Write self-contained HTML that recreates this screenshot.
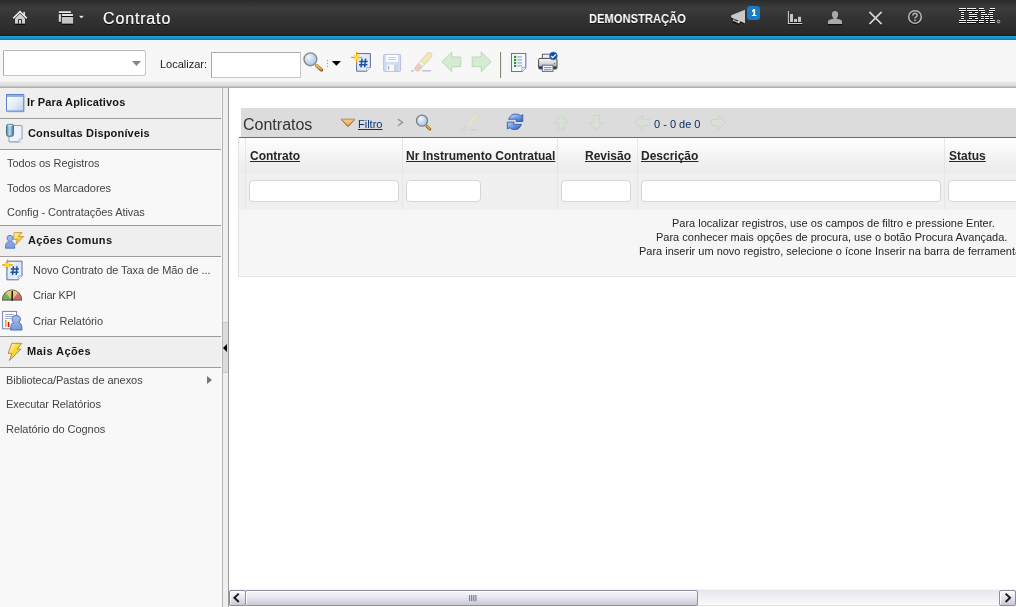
<!DOCTYPE html>
<html><head><meta charset="utf-8">
<style>
*{box-sizing:border-box}
html,body{margin:0;padding:0}
body{width:1016px;height:607px;overflow:hidden;position:relative;background:#fff;font-family:"Liberation Sans",sans-serif;}
.a{position:absolute}
.t{position:absolute;white-space:nowrap;font-size:11px;line-height:13px;color:#444;will-change:transform}
.s{letter-spacing:-0.06px}
.b{font-weight:bold}
.t{text-decoration-skip-ink:none}
svg{position:absolute;overflow:visible}
</style></head><body>

<!-- HEADER -->
<div class="a" style="left:0;top:0;width:1016px;height:36px;background:linear-gradient(#2b2b2b 0px,#3c3c3c 8px,#353535 15px,#2e2e2e 26px,#272727 34px,#1e1a1a 36px)"></div>
<div class="a" style="left:0;top:36px;width:1016px;height:4px;background:linear-gradient(#1ea0d8 0,#1694cc 50%,#0b78b0 100%)"></div>
<div class="t" style="left:103px;top:10px;font-size:16px;line-height:18px;color:#fff;letter-spacing:0.85px;-webkit-text-stroke:0.2px #fff;text-shadow:0 1px 0 #000">Contrato</div>
<div class="t b" style="left:589px;top:12px;font-size:12.5px;line-height:15px;color:#fff;transform:scaleX(.895);transform-origin:0 0;text-shadow:0 1px 0 #111">DEMONSTRAÇÃO</div>


<!-- header icons -->
<svg style="left:10px;top:8px" width="20" height="20">
 <polyline points="3.2,11.2 10,4.4 16.8,11.2" fill="none" stroke="#000" stroke-width="1.8" opacity=".8"/>
 <rect x="13.3" y="3.9" width="1.7" height="4.2" fill="#dcdcdc"/>
 <polygon points="5,10.5 10,5.5 15,10.5 15,15.8 5,15.8" fill="#cdcdcd"/>
 <polyline points="3.2,10.4 10,3.6 16.8,10.4" fill="none" stroke="#ececec" stroke-width="1.6"/>
 <rect x="8.2" y="11.2" width="3.7" height="4.6" fill="#111"/>
 <rect x="9" y="12" width="2.1" height="3.8" fill="#d8d8d8"/>
 <rect x="5" y="15.8" width="10.2" height="1" fill="#000" opacity=".85"/>
</svg>
<svg style="left:55px;top:8px" width="32" height="20">
 <rect x="3.8" y="3.2" width="12.3" height="2" rx="0.8" fill="#e6e6e6"/>
 <rect x="3.8" y="5.2" width="12.3" height="1" fill="#000" opacity=".8"/>
 <rect x="3.8" y="6.1" width="2.1" height="7.8" fill="#d6d6d6"/>
 <rect x="3.8" y="13.9" width="2.1" height="1" fill="#000" opacity=".7"/>
 <rect x="6.9" y="6.1" width="11.2" height="1.9" rx="0.8" fill="#e4e4e4"/>
 <rect x="6.9" y="8" width="11.2" height="1" fill="#000" opacity=".8"/>
 <rect x="6.9" y="9" width="11.2" height="6.8" rx="0.6" fill="#c4c4c4"/>
 <rect x="6.9" y="15.8" width="11.2" height="1" fill="#000" opacity=".8"/>
 <polygon points="23.4,7.4 29.4,7.4 26.4,11.2" fill="#000" opacity=".7"/>
 <polygon points="23.9,7.7 28.9,7.7 26.4,10.6" fill="#eee"/>
</svg>
<svg style="left:726px;top:4px" width="38" height="24">
 <polygon points="5.2,12.2 19,6 19,19.4 14.6,17.4 13,20.2 6.6,17.5 8,15.6 5.2,14.4" fill="#000" opacity=".6" transform="translate(0,1)"/>
 <polygon points="5.2,11.2 19,5.8 19,19.4 14.6,17.3 13,19.4 6.6,16.6 8,14.8 5.2,13.6" fill="#c9c9c9"/>
 <polygon points="8.6,14.9 12.6,16.4 11.6,17.6 7.8,16" fill="#333"/>
 <rect x="21" y="2" width="13" height="14" rx="3" fill="#1a7bc2"/>
 <path d="M27.4,5.1 H29.1 V11 H30.4 V12.1 H25.9 V11 H27.4 V7.2 L26,7.9 V6.6 Z" fill="#fff"/>
</svg>
<svg style="left:784px;top:6px" width="20" height="20">
 <rect x="3.9" y="5" width="1" height="13" fill="#ccc"/>
 <rect x="3.9" y="17" width="14.4" height="1" fill="#ccc"/>
 <rect x="3.9" y="18" width="14.4" height="1" fill="#000" opacity=".6"/>
 <rect x="6" y="8" width="3" height="8" fill="#c4c4c4"/>
 <rect x="10" y="13" width="3" height="3" fill="#c4c4c4"/>
 <rect x="14" y="10.8" width="3" height="5.2" fill="#c4c4c4"/>
 <rect x="6" y="16" width="11" height="1" fill="#000" opacity=".5"/>
</svg>
<svg style="left:826px;top:6px" width="20" height="20">
 <path d="M2,18.2 L2,15.8 Q2,13.6 6,13 L7.6,12.4 Q5.8,10.8 5.8,8.6 Q5.8,5 9,5 Q12.2,5 12.2,8.6 Q12.2,10.8 10.4,12.4 L12,13 Q16,13.6 16,15.8 L16,18.2 Z" fill="#000" opacity=".7" transform="translate(0,1)"/>
 <path d="M2,18 L2,15.8 Q2,13.6 6,13 L7.6,12.4 Q5.8,10.8 5.8,8.6 Q5.8,5 9,5 Q12.2,5 12.2,8.6 Q12.2,10.8 10.4,12.4 L12,13 Q16,13.6 16,15.8 L16,18 Z" fill="#a8a8a8"/>
</svg>
<svg style="left:864px;top:6px" width="22" height="22">
 <path d="M5.4,6 L17.6,18.2 M17.6,6 L5.4,18.2" stroke="#000" stroke-width="1.9" opacity=".6" transform="translate(0,1)"/>
 <path d="M5.4,6 L17.6,18.2 M17.6,6 L5.4,18.2" stroke="#cfcfcf" stroke-width="1.8"/>
</svg>
<svg style="left:906px;top:8px" width="20" height="20">
 <circle cx="9" cy="9.2" r="6.3" fill="none" stroke="#000" stroke-width="1.7" opacity=".5" transform="translate(0,.7)"/>
 <circle cx="9" cy="9" r="6.3" fill="none" stroke="#b4b4b4" stroke-width="1.6"/>
 <path d="M6.9,7.6 Q6.9,5.3 9,5.3 Q11.1,5.3 11.1,7.3 Q11.1,8.5 9.8,9.1 Q9,9.5 9,10.6" fill="none" stroke="#b4b4b4" stroke-width="1.5"/>
 <rect x="8.2" y="11.5" width="1.6" height="1.5" fill="#b4b4b4"/>
</svg>
<svg style="left:955px;top:4px" width="50" height="24"><rect x="4" y="4" width="7" height="1" fill="#f2f2f2"/><rect x="4" y="5" width="7" height="1" fill="#000" opacity=".75"/><rect x="12" y="4" width="9" height="1" fill="#f2f2f2"/><rect x="12" y="5" width="9" height="1" fill="#000" opacity=".75"/><rect x="24" y="4" width="5" height="1" fill="#f2f2f2"/><rect x="24" y="5" width="5" height="1" fill="#000" opacity=".75"/><rect x="35" y="4" width="5" height="1" fill="#f2f2f2"/><rect x="35" y="5" width="5" height="1" fill="#000" opacity=".75"/><rect x="4" y="6" width="7" height="1" fill="#f2f2f2"/><rect x="4" y="7" width="7" height="1" fill="#000" opacity=".75"/><rect x="12" y="6" width="11" height="1" fill="#f2f2f2"/><rect x="12" y="7" width="11" height="1" fill="#000" opacity=".75"/><rect x="24" y="6" width="6" height="1" fill="#f2f2f2"/><rect x="24" y="7" width="6" height="1" fill="#000" opacity=".75"/><rect x="34" y="6" width="6" height="1" fill="#f2f2f2"/><rect x="34" y="7" width="6" height="1" fill="#000" opacity=".75"/><rect x="6" y="8" width="3" height="1" fill="#f2f2f2"/><rect x="6" y="9" width="3" height="1" fill="#000" opacity=".75"/><rect x="14" y="8" width="3" height="1" fill="#f2f2f2"/><rect x="14" y="9" width="3" height="1" fill="#000" opacity=".75"/><rect x="20" y="8" width="3" height="1" fill="#f2f2f2"/><rect x="20" y="9" width="3" height="1" fill="#000" opacity=".75"/><rect x="26" y="8" width="4" height="1" fill="#f2f2f2"/><rect x="26" y="9" width="4" height="1" fill="#000" opacity=".75"/><rect x="34" y="8" width="4" height="1" fill="#f2f2f2"/><rect x="34" y="9" width="4" height="1" fill="#000" opacity=".75"/><rect x="6" y="10" width="3" height="1" fill="#f2f2f2"/><rect x="6" y="11" width="3" height="1" fill="#000" opacity=".75"/><rect x="14" y="10" width="8" height="1" fill="#f2f2f2"/><rect x="14" y="11" width="8" height="1" fill="#000" opacity=".75"/><rect x="26" y="10" width="6" height="1" fill="#f2f2f2"/><rect x="26" y="11" width="6" height="1" fill="#000" opacity=".75"/><rect x="33" y="10" width="5" height="1" fill="#f2f2f2"/><rect x="33" y="11" width="5" height="1" fill="#000" opacity=".75"/><rect x="6" y="12" width="3" height="1" fill="#f2f2f2"/><rect x="6" y="13" width="3" height="1" fill="#000" opacity=".75"/><rect x="14" y="12" width="8" height="1" fill="#f2f2f2"/><rect x="14" y="13" width="8" height="1" fill="#000" opacity=".75"/><rect x="26" y="12" width="3" height="1" fill="#f2f2f2"/><rect x="26" y="13" width="3" height="1" fill="#000" opacity=".75"/><rect x="30" y="12" width="4" height="1" fill="#f2f2f2"/><rect x="30" y="13" width="4" height="1" fill="#000" opacity=".75"/><rect x="35" y="12" width="3" height="1" fill="#f2f2f2"/><rect x="35" y="13" width="3" height="1" fill="#000" opacity=".75"/><rect x="6" y="14" width="3" height="1" fill="#f2f2f2"/><rect x="6" y="15" width="3" height="1" fill="#000" opacity=".75"/><rect x="14" y="14" width="3" height="1" fill="#f2f2f2"/><rect x="14" y="15" width="3" height="1" fill="#000" opacity=".75"/><rect x="20" y="14" width="3" height="1" fill="#f2f2f2"/><rect x="20" y="15" width="3" height="1" fill="#000" opacity=".75"/><rect x="26" y="14" width="3" height="1" fill="#f2f2f2"/><rect x="26" y="15" width="3" height="1" fill="#000" opacity=".75"/><rect x="30" y="14" width="4" height="1" fill="#f2f2f2"/><rect x="30" y="15" width="4" height="1" fill="#000" opacity=".75"/><rect x="35" y="14" width="3" height="1" fill="#f2f2f2"/><rect x="35" y="15" width="3" height="1" fill="#000" opacity=".75"/><rect x="4" y="16" width="7" height="1" fill="#f2f2f2"/><rect x="4" y="17" width="7" height="1" fill="#000" opacity=".75"/><rect x="12" y="16" width="11" height="1" fill="#f2f2f2"/><rect x="12" y="17" width="11" height="1" fill="#000" opacity=".75"/><rect x="24" y="16" width="5" height="1" fill="#f2f2f2"/><rect x="24" y="17" width="5" height="1" fill="#000" opacity=".75"/><rect x="31" y="16" width="2" height="1" fill="#f2f2f2"/><rect x="31" y="17" width="2" height="1" fill="#000" opacity=".75"/><rect x="35" y="16" width="5" height="1" fill="#f2f2f2"/><rect x="35" y="17" width="5" height="1" fill="#000" opacity=".75"/><rect x="4" y="18" width="7" height="1" fill="#f2f2f2"/><rect x="4" y="19" width="7" height="1" fill="#000" opacity=".75"/><rect x="12" y="18" width="9" height="1" fill="#f2f2f2"/><rect x="12" y="19" width="9" height="1" fill="#000" opacity=".75"/><rect x="24" y="18" width="5" height="1" fill="#f2f2f2"/><rect x="24" y="19" width="5" height="1" fill="#000" opacity=".75"/><rect x="31" y="18" width="2" height="1" fill="#f2f2f2"/><rect x="31" y="19" width="2" height="1" fill="#000" opacity=".75"/><rect x="35" y="18" width="5" height="1" fill="#f2f2f2"/><rect x="35" y="19" width="5" height="1" fill="#000" opacity=".75"/><circle cx="43.5" cy="17.5" r="1.3" fill="none" stroke="#ddd" stroke-width=".8"/></svg>
<!-- TOOLBAR -->
<div class="a" style="left:0;top:40px;width:1016px;height:48px;background:linear-gradient(#f7f7f7 0,#f7f7f7 41px,#e9e9e9 42px,#dadada 46px,#aeaeae 47px)"></div>
<div class="a" style="left:3px;top:50px;width:143px;height:26px;background:#fff;border:1px solid #c8c8c8;border-left-color:#aaa;border-top-color:#bbb;border-radius:0 3px 3px 0"></div>
<svg style="left:132px;top:61px" width="10" height="6"><path d="M0 0H9L4.5 5Z" fill="#888"/></svg>
<div class="t" style="left:160px;top:58px;color:#222">Localizar:</div>
<div class="a" style="left:211px;top:52px;width:90px;height:26px;background:#fff;border:1px solid #c6c6c6;border-left-color:#aaa;border-top-color:#aaa"></div>


<!-- toolbar icons -->
<svg style="left:300px;top:48px" width="46" height="28">
 <defs>
  <radialGradient id="lens" cx="0.38" cy="0.35" r="0.7"><stop offset="0" stop-color="#f4f8fc"/><stop offset=".45" stop-color="#c8ddf2"/><stop offset="1" stop-color="#a6c6ea"/></radialGradient>
  <linearGradient id="hdl" x1="0" y1="0" x2="1" y2="1"><stop offset="0" stop-color="#ffd84a"/><stop offset="1" stop-color="#e89a10"/></linearGradient>
 </defs>
 <line x1="16.6" y1="17.6" x2="21.6" y2="22" stroke="#7a4a20" stroke-width="3.2" stroke-linecap="round"/>
 <line x1="16.6" y1="17.4" x2="21.4" y2="21.6" stroke="url(#hdl)" stroke-width="2" stroke-linecap="round"/>
 <circle cx="10.4" cy="11.3" r="6.4" fill="url(#lens)" stroke="#8a8a8a" stroke-width="1.4"/>
 <circle cx="27.5" cy="12.5" r=".7" fill="#9aa0b8"/>
 <circle cx="27.5" cy="15.4" r=".7" fill="#9aa0b8"/>
 <circle cx="27.5" cy="18.5" r=".7" fill="#9aa0b8"/>
 <polygon points="31.8,12.9 41,12.9 36.4,17.8" fill="#000"/>
</svg>
<svg style="left:348px;top:49px" width="26" height="26">
 <defs><linearGradient id="pg" x1="0" y1="0" x2="1" y2="1"><stop offset="0" stop-color="#fff"/><stop offset=".5" stop-color="#dde6f6"/><stop offset="1" stop-color="#f8faff"/></linearGradient></defs>
 <path d="M8.6,4.6 H22.4 V18.4 L18.8,22.2 H8.6 Z" fill="url(#pg)" stroke="#5c6c9c" stroke-width="1"/>
 <path d="M22.4,18.4 H18.8 V22.2" fill="#fff" stroke="#8898c0" stroke-width=".8"/>
 <path d="M14,9.6 L13,18.4 M17.6,9.6 L16.6,18.4 M11.3,12.4 H19.7 M11,15.8 H19.4" stroke="#1a52b0" stroke-width="1.5" fill="none"/>
 <path d="M8.6,3 V13.8 M3,8.4 H14.2" stroke="#f5a000" stroke-width="1.3"/>
 <path d="M5.4,5.8 L11.8,11 M11.8,5.8 L5.4,11" stroke="#f5b000" stroke-width=".9" opacity=".8"/>
 <circle cx="8.6" cy="8.4" r="2" fill="#ffe800"/>
</svg>
<svg style="left:380px;top:49px" width="54" height="26" opacity="1">
 <rect x="3.6" y="5.4" width="17" height="17" rx="1" fill="#d2dcf2" stroke="#b8c4de" stroke-width="1"/>
 <rect x="6" y="6" width="12" height="7" fill="#fbfcff"/>
 <rect x="8" y="8" width="8" height=".9" fill="#c4cad8"/>
 <rect x="8" y="10" width="8" height=".9" fill="#c4cad8"/>
 <rect x="7" y="15.6" width="11" height="6.4" fill="#c8d2e8"/>
 <rect x="7" y="15.6" width="7" height="6.4" fill="#f8f8fa"/>
 <rect x="8" y="17" width="1.2" height="3.6" fill="#a8a8a8"/>
 <path d="M37.6,19.4 L49.2,6.2" stroke="#d8ccb4" stroke-width="6" stroke-linecap="round"/>
 <path d="M42.4,13.9 L49.2,6.2" stroke="#f2eab4" stroke-width="4.6" stroke-linecap="round"/>
 <path d="M37.6,19.4 L40.4,16.2" stroke="#f0c6be" stroke-width="4.6" stroke-linecap="round"/>
 <path d="M40.2,16.4 L43.2,13" stroke="#d2e6de" stroke-width="4.6"/>
 <path d="M41.3,15.2 L42.1,14.2" stroke="#f4faf8" stroke-width="4.6"/>
 <rect x="31" y="21" width="3" height="1.6" fill="#c0c6dc"/>
 <rect x="42" y="21" width="9" height="1.6" fill="#c0c6dc"/>
</svg>
<svg style="left:438px;top:49px" width="70" height="30">
 <path d="M4,12.7 L13.7,3 V8 H22.8 V17.7 H13.7 V22.8 Z" fill="#d6ecd2" stroke="#b6dab2" stroke-width="1" stroke-linejoin="round"/>
 <path d="M53,12.7 L43.3,3 V8 H34.2 V17.7 H43.3 V22.8 Z" fill="#d6ecd2" stroke="#b6dab2" stroke-width="1" stroke-linejoin="round"/>
 <rect x="62" y="3" width="1.1" height="26" fill="#8c8878"/>
</svg>
<svg style="left:506px;top:49px" width="56" height="26">
 <path d="M5.5,4.5 H19.8 V18.6 L16,22.5 H5.5 Z" fill="#f6f8fe" stroke="#6676a6" stroke-width="1.1"/>
 <path d="M19.8,18.6 H16 V22.5" fill="#fff" stroke="#8090b8" stroke-width=".8"/>
 <rect x="8" y="6.8" width="2.2" height="2.2" fill="#20a020"/>
 <rect x="8" y="9.8" width="2.2" height="2.2" fill="#20a020"/>
 <rect x="8" y="12.8" width="2.2" height="2.2" fill="#20a020"/>
 <rect x="8" y="15.8" width="2.2" height="2.2" fill="#20a020"/>
 <rect x="11.3" y="7.4" width="4.7" height="1" fill="#8896b8"/>
 <rect x="11.3" y="10.4" width="4.7" height="1" fill="#8896b8"/>
 <rect x="11.3" y="13.4" width="4.7" height="1" fill="#8896b8"/>
 <rect x="11.3" y="16.4" width="4.7" height="1" fill="#8896b8"/>
 <defs><linearGradient id="prn" x1="0" y1="0" x2="0" y2="1"><stop offset="0" stop-color="#f6f6f6"/><stop offset=".55" stop-color="#d2d2d2"/><stop offset="1" stop-color="#8a8a8a"/></linearGradient></defs>
 <rect x="36.4" y="5.2" width="11" height="7" fill="#eef0f8" stroke="#5a6080" stroke-width="1"/>
 <rect x="32.6" y="9.4" width="18.4" height="10.6" rx="1.4" fill="url(#prn)" stroke="#4a4a4a" stroke-width="1"/>
 <rect x="33.2" y="17.4" width="17.2" height="2.2" fill="#303030"/>
 <rect x="36.4" y="16.2" width="10.6" height="6.2" fill="#fafbfe" stroke="#5a6a98" stroke-width="1"/>
 <rect x="38" y="18.2" width="7.4" height=".9" fill="#777"/>
 <rect x="38" y="20.3" width="7.4" height=".9" fill="#777"/>
 <circle cx="48.5" cy="14.6" r=".8" fill="#30b030"/>
 <circle cx="47.4" cy="6.9" r="4" fill="#1448a0" stroke="#6a90d8" stroke-width=".7"/>
 <path d="M45.2,7 L46.8,8.7 L49.8,5.3" stroke="#fff" stroke-width="1.2" fill="none"/>
</svg>
<!-- SIDEBAR -->
<div class="a" style="left:0;top:88px;width:222px;height:519px;background:#f8f8f8"></div>
<div class="a" style="left:222px;top:88px;width:7px;height:519px;background:#efefef;border-left:1px solid #b4b4b4;border-right:1px solid #9a9a9a"></div>
<div class="a" style="left:223px;top:322px;width:5px;height:51px;background:#dcdcdc;border-top:1px solid #c8c8c8;border-bottom:1px solid #c8c8c8"></div>
<svg style="left:223px;top:344px" width="5" height="8"><path d="M4 0V8L0 4Z" fill="#000"/></svg>

<div class="a" style="left:0;top:88px;width:221px;height:31px;background:#efefef;border-bottom:1px solid #9c9c9c"></div>
<div class="a" style="left:0;top:119px;width:221px;height:31px;background:#efefef;border-bottom:1px solid #9c9c9c"></div>
<div class="t b" style="left:27px;top:96px;color:#161616;letter-spacing:0.15px">Ir Para Aplicativos</div>
<div class="t b" style="left:28px;top:127px;color:#161616;letter-spacing:0.18px">Consultas Disponíveis</div>
<div class="t s" style="left:6.5px;top:157px">Todos os Registros</div>
<div class="t s" style="left:6.5px;top:182px">Todos os Marcadores</div>
<div class="t s" style="left:6.5px;top:206px">Config - Contratações Ativas</div>

<div class="a" style="left:0;top:225px;width:221px;height:32px;background:#efefef;border-top:1px solid #9c9c9c;border-bottom:1px solid #9c9c9c"></div>
<div class="t b" style="left:28px;top:234px;color:#161616;letter-spacing:0.36px">Ações Comuns</div>
<div class="t s" style="left:33px;top:264px">Novo Contrato de Taxa de Mão de ...</div>
<div class="t s" style="left:33px;top:289px;letter-spacing:-0.22px">Criar KPI</div>
<div class="t s" style="left:33px;top:315px">Criar Relatório</div>

<div class="a" style="left:0;top:336px;width:221px;height:32px;background:#efefef;border-top:1px solid #9c9c9c;border-bottom:1px solid #9c9c9c"></div>
<div class="t b" style="left:27px;top:345px;color:#161616;letter-spacing:0.39px">Mais Ações</div>
<div class="t s" style="left:6px;top:374px">Biblioteca/Pastas de anexos</div>
<svg style="left:207px;top:376px" width="5" height="8"><path d="M0 0V8L5 4Z" fill="#777"/></svg>
<div class="t s" style="left:6px;top:398px">Executar Relatórios</div>
<div class="t s" style="left:6px;top:423px">Relatório do Cognos</div>


<!-- sidebar icons -->
<svg style="left:0;top:88px" width="28" height="60">
 <defs>
  <linearGradient id="win" x1="0" y1="0" x2="1" y2="1"><stop offset="0" stop-color="#ffffff"/><stop offset=".5" stop-color="#e6eef9"/><stop offset="1" stop-color="#bcd0ee"/></linearGradient>
  <linearGradient id="cyl" x1="0" y1="0" x2="1" y2="0"><stop offset="0" stop-color="#5a8ca8"/><stop offset=".45" stop-color="#bcdce8"/><stop offset="1" stop-color="#4a7c98"/></linearGradient>
 </defs>
 <rect x="6.5" y="6.5" width="17.2" height="16.6" fill="url(#win)" stroke="#5f84cc" stroke-width="1"/>
 <rect x="7" y="7" width="16.2" height="2" fill="#8cb2ea"/>
 <rect x="7.5" y="23.4" width="17" height="1" fill="#000" opacity=".15"/>
 <rect x="24.2" y="7.5" width="1" height="16" fill="#000" opacity=".1"/>
 <path d="M9,37.5 H22 V51 L19,53.8 H9 Z" fill="#eef2fb" stroke="#8c9cc4" stroke-width="1"/>
 <path d="M22,51 H19 V53.8" fill="#fff" stroke="#a0acd0" stroke-width=".7"/>
 <rect x="9.5" y="54.2" width="12" height=".9" fill="#000" opacity=".1"/>
 <rect x="6.6" y="36.4" width="6.8" height="11.8" rx="1.6" fill="url(#cyl)" stroke="#36607e" stroke-width=".9"/>
 <ellipse cx="10" cy="37.6" rx="2.8" ry="1" fill="#d8ecf2" opacity=".7"/>
 
</svg>
<svg style="left:0;top:228px" width="28" height="28">
 <defs>
  <linearGradient id="bolt" x1="0" y1="0" x2="1" y2="1"><stop offset="0" stop-color="#fffbe0"/><stop offset=".45" stop-color="#f8d830"/><stop offset="1" stop-color="#f0c020"/></linearGradient>
  <linearGradient id="usr" x1="0" y1="0" x2="0" y2="1"><stop offset="0" stop-color="#a8c0ee"/><stop offset="1" stop-color="#7898d8"/></linearGradient>
 </defs>
 <path d="M14.2,4.6 H22 L18.4,8.6 H23.6 L15.6,16.8 L17.4,11.4 H13.6 Z" fill="url(#bolt)" stroke="#c88e40" stroke-width=".9" stroke-linejoin="round"/>
 <path d="M5.4,20.2 Q5.4,13.8 8.6,13.8 L9.4,13.6 Q7,12.4 7,10.2 Q7,7.4 10,7.4 Q13,7.4 13,10.2 Q13,12.4 10.6,13.6 L11.4,13.8 Q14.8,13.8 14.8,20.2 Z" fill="url(#usr)" stroke="#5878c0" stroke-width=".9"/>
</svg>
<svg style="left:0;top:256px" width="28" height="80">
 <defs>
  <linearGradient id="pg2" x1="0" y1="0" x2="1" y2="1"><stop offset="0" stop-color="#fff"/><stop offset=".5" stop-color="#dde6f6"/><stop offset="1" stop-color="#f8faff"/></linearGradient>
  
 </defs>
 <path d="M6.9,5.2 H22 V20 L18.2,23.8 H6.9 Z" fill="url(#pg2)" stroke="#5c6c9c" stroke-width="1"/>
 <path d="M22,20 H18.2 V23.8" fill="#fff" stroke="#8898c0" stroke-width=".8"/>
 <path d="M13.4,10.2 L12.6,19 M17,10.2 L16.2,19 M10.8,12.9 H18.9 M10.4,16.3 H18.5" stroke="#1a52b0" stroke-width="1.5" fill="none"/>
 <path d="M7.5,3.6 V14.4 M2.2,9 H12.8" stroke="#f5a000" stroke-width="1.3"/>
 <path d="M4.5,6 L10.5,12 M10.5,6 L4.5,12" stroke="#f5b000" stroke-width=".9" opacity=".8"/>
 <circle cx="7.5" cy="9" r="1.9" fill="#ffe800"/>
 <defs><linearGradient id="gshade" x1="0" y1="0" x2="0" y2="1"><stop offset="0" stop-color="#fff" stop-opacity=".25"/><stop offset="1" stop-color="#000" stop-opacity=".08"/></linearGradient></defs>
 <path d="M12,44 L2,44 A10,10.5 0 0 1 5.57,35.96 Z" fill="#78c06c"/>
 <path d="M12,44 L5.57,35.96 A10,10.5 0 0 1 18.43,35.96 Z" fill="#f2d46a"/>
 <path d="M12,44 L18.43,35.96 A10,10.5 0 0 1 22,44 Z" fill="#e27272"/>
 <path d="M2,44 A10,10.5 0 0 1 22,44 Z" fill="url(#gshade)"/>
 <path d="M2.4,44 A9.6,10.1 0 0 1 21.6,44" fill="none" stroke="#6a5a40" stroke-width=".9"/>
 <rect x="2" y="43.6" width="20" height="1" fill="#605040"/>
 <path d="M12,44.8 L12.3,35" stroke="#000" stroke-width="1.3"/>
 <rect x="2.6" y="55.4" width="14" height="17.4" fill="#fafcff" stroke="#7080b0" stroke-width="1"/>
 <rect x="5" y="58" width="9" height=".9" fill="#98a4c8"/>
 <rect x="5" y="60" width="9" height=".9" fill="#98a4c8"/>
 <rect x="5" y="62" width="6" height=".9" fill="#98a4c8"/>
 <rect x="5" y="64" width="1.6" height="7" fill="#e8b000"/>
 <rect x="7.8" y="66" width="1.6" height="5" fill="#d01010"/>
 <path d="M10.6,74 Q10.6,66.6 13.8,66.6 Q12,65.2 12,63.2 Q12,59.6 16.2,59.6 Q20.4,59.6 20.4,63.2 Q20.4,65.2 18.6,66.6 Q22,66.6 22,74 Z" fill="url(#usr)" stroke="#4870b8" stroke-width="1"/>
</svg>
<svg style="left:0;top:338px" width="28" height="28">
 <path d="M11.7,5.3 H21.8 L17.2,11.1 H20.9 L9.4,22.6 L11.9,15.4 H8.2 Z" fill="url(#bolt)" stroke="#c08848" stroke-width="1" stroke-linejoin="round"/>
</svg>
<!-- MAIN -->
<div class="a" style="left:241px;top:108px;width:775px;height:29px;background:#dcdcdc"></div>
<div class="a" style="left:239px;top:137px;width:777px;height:1px;background:#1784bd"></div>
<div class="t" style="left:243px;top:116px;font-size:16px;line-height:18px;color:#333">Contratos</div>
<svg style="left:340px;top:118px" width="16" height="10"><defs><linearGradient id="ftr" x1="0" y1="0" x2="0" y2="1"><stop offset="0" stop-color="#f6d6a6"/><stop offset="1" stop-color="#e0a040"/></linearGradient></defs><path d="M1.2,1.3 H14.8 L8,8.6 Z" fill="url(#ftr)" stroke="#8c5412" stroke-width="1" stroke-linejoin="round"/><rect x="1.2" y="1" width="13.6" height="1.2" fill="#eca21c"/></svg>
<div class="t" style="left:358px;top:118px;color:#0a3474;text-decoration:underline">Filtro</div>
<div class="t" style="left:654px;top:118px;color:#00285e">0 - 0 de 0</div>


<!-- table toolbar icons -->
<svg style="left:394px;top:110px" width="340" height="24">
 <defs>
  <radialGradient id="lens2" cx="0.4" cy="0.35" r="0.7"><stop offset="0" stop-color="#f4f8fc"/><stop offset=".5" stop-color="#c4daf2"/><stop offset="1" stop-color="#a2c2e8"/></radialGradient>
  <linearGradient id="rf" x1="0" y1="0" x2="1" y2="1"><stop offset="0" stop-color="#c4dcf8"/><stop offset=".5" stop-color="#7aa4e4"/><stop offset="1" stop-color="#2e60bc"/></linearGradient><linearGradient id="rf2" x1="0" y1="0" x2="1" y2="1"><stop offset="0" stop-color="#b8d2f4"/><stop offset=".5" stop-color="#6a96dc"/><stop offset="1" stop-color="#2a58b0"/></linearGradient>
 </defs>
 <path d="M4,9.1 L8.6,12.4 L4,15.7" fill="none" stroke="#9a9684" stroke-width="1.3"/>
 <line x1="32.8" y1="16.2" x2="36" y2="19.2" stroke="#7a4a20" stroke-width="2.6" stroke-linecap="round"/>
 <line x1="32.8" y1="16" x2="35.8" y2="18.9" stroke="#f2b020" stroke-width="1.5" stroke-linecap="round"/>
 <circle cx="28" cy="10.7" r="5.5" fill="url(#lens2)" stroke="#7c7c7c" stroke-width="1.3"/>
 <g opacity=".4">
  <path d="M71.6,18.4 L82,6.6" stroke="#d8ccb4" stroke-width="5" stroke-linecap="round"/>
  <path d="M75.8,13.6 L82,6.6" stroke="#f2eab4" stroke-width="3.8" stroke-linecap="round"/>
  <path d="M71.6,18.4 L74.2,15.5" stroke="#f0cec6" stroke-width="3.8" stroke-linecap="round"/>
  <path d="M73.8,15.9 L76.6,12.7" stroke="#e2eee8" stroke-width="3.8"/>
  <rect x="67" y="19" width="2.4" height="1.2" fill="#aab4d0"/>
  <rect x="76" y="19" width="7" height="1.2" fill="#aab4d0"/>
 </g>
 <g transform="translate(110,1)"><path d="M4.7,8.6 C5.6,5 8,3 11.2,3 C13.6,3 15.6,3.8 16.8,4.8 L18.8,3.6 V10.5 H12 L12.6,8.2 H5 Z" fill="url(#rf)" stroke="#2a52a0" stroke-width=".8" stroke-linejoin="round"/>
 <path d="M17.4,13 C16.5,16.6 14.1,18.6 10.9,18.6 C8.5,18.6 6.5,17.8 5.3,16.8 L3.3,18 V11.1 H10.1 L9.5,13.4 H17.1 Z" fill="url(#rf2)" stroke="#2a52a0" stroke-width=".8" stroke-linejoin="round"/></g>
 <g fill="#d8e0d6" stroke="#c4d2c2" stroke-width=".8" opacity=".95">
  <path d="M167.4,5.4 L174.6,12.8 H170.2 V19.6 H164.6 V12.8 H160.2 Z"/>
  <path d="M202.4,19.6 L209.6,12.6 H205.2 V5.4 H199.6 V12.6 H195.2 Z"/>
  <path d="M241.4,12.4 L248.4,5.4 V9.4 H255.6 V15.4 H248.4 V19.4 Z"/>
  <path d="M331.4,12.4 L324.4,5.4 V9.4 H317.2 V15.4 H324.4 V19.4 Z"/>
 </g>
</svg>
<!-- table header -->
<div class="a" style="left:238px;top:138px;width:778px;height:35px;background:linear-gradient(#fefefe,#ebebeb);border-left:1px solid #e2e2e2"></div>
<div class="a" style="left:238px;top:173px;width:778px;height:37px;background:#f0f0f0;border-left:1px solid #e2e2e2"></div>
<div class="a" style="left:238px;top:210px;width:778px;height:67px;background:#f6f6f6;border-left:1px solid #e2e2e2;border-bottom:1px solid #e4e4e4"></div>
<div class="a" style="left:245px;top:138px;width:1px;height:72px;background:#e6e6e6"></div><div class="a" style="left:402px;top:138px;width:1px;height:72px;background:#e6e6e6"></div><div class="a" style="left:557px;top:138px;width:1px;height:72px;background:#e6e6e6"></div><div class="a" style="left:637px;top:138px;width:1px;height:72px;background:#e6e6e6"></div><div class="a" style="left:944px;top:138px;width:1px;height:72px;background:#e6e6e6"></div>
<div class="t b" style="left:250px;top:149px;font-size:12px;line-height:14px;color:#262626;text-decoration:underline">Contrato</div>
<div class="t b" style="left:406px;top:149px;font-size:12px;line-height:14px;color:#262626;text-decoration:underline">Nr Instrumento Contratual</div>
<div class="t b" style="left:585px;top:149px;font-size:12px;line-height:14px;color:#262626;text-decoration:underline">Revisão</div>
<div class="t b" style="left:641px;top:149px;font-size:12px;line-height:14px;color:#262626;text-decoration:underline">Descrição</div>
<div class="t b" style="left:949px;top:149px;font-size:12px;line-height:14px;color:#262626;text-decoration:underline">Status</div>

<div class="a" style="left:249px;top:180px;width:150px;height:22px;background:#fff;border:1px solid #d6d6d6;border-radius:4px"></div>
<div class="a" style="left:406px;top:180px;width:75px;height:22px;background:#fff;border:1px solid #d6d6d6;border-radius:4px"></div>
<div class="a" style="left:561px;top:180px;width:70px;height:22px;background:#fff;border:1px solid #d6d6d6;border-radius:4px"></div>
<div class="a" style="left:641px;top:180px;width:300px;height:22px;background:#fff;border:1px solid #d6d6d6;border-radius:4px"></div>
<div class="a" style="left:948px;top:180px;width:80px;height:22px;background:#fff;border:1px solid #d6d6d6;border-radius:4px"></div>

<div class="t" style="left:672px;top:217px;color:#262626">Para localizar registros, use os campos de filtro e pressione Enter.</div>
<div class="t" style="left:656px;top:231px;color:#262626">Para conhecer mais opções de procura, use o botão Procura Avançada.</div>
<div class="t" style="left:639px;top:245px;color:#262626">Para inserir um novo registro, selecione o ícone Inserir na barra de ferramentas.</div>

<!-- scrollbar -->
<div class="a" style="left:229px;top:589px;width:787px;height:1px;background:#f6f6ee"></div>
<div class="a" style="left:229px;top:590px;width:787px;height:16px;background:linear-gradient(#e6e7ee,#f9f9fb);border-bottom:1px solid #e2e3ea"></div>
<div class="a" style="left:229px;top:590px;width:17px;height:16px;background:linear-gradient(#fdfdfe 0,#e8e8f0 40%,#c8cad8 100%);border:1px solid #8a8e9c;border-radius:2px;box-shadow:inset 1px 1px 0 #fff"></div>
<svg style="left:229px;top:590px" width="17" height="16"><path d="M9.8,3.6 L5.4,7.8 L9.8,12" fill="none" stroke="#1e1e1e" stroke-width="2"/></svg>
<div class="a" style="left:245px;top:590px;width:453px;height:16px;background:linear-gradient(#f6f6f9 0,#e8e8ee 45%,#c6c8d6 100%);border:1px solid #8e92a0;border-radius:2px;box-shadow:inset 1px 1px 0 #fff"></div>
<svg style="left:466px;top:594px" width="12" height="9"><g fill="#7a8090"><rect x="3" y="1" width="1.2" height="6.2"/><rect x="5.1" y="1" width="1.2" height="6.2"/><rect x="7.2" y="1" width="1.2" height="6.2"/><rect x="9.3" y="1" width="1.2" height="6.2"/></g></svg>
<div class="a" style="left:999px;top:590px;width:17px;height:16px;background:linear-gradient(#fdfdfe 0,#e8e8f0 40%,#c8cad8 100%);border:1px solid #8a8e9c;border-radius:2px;box-shadow:inset 1px 1px 0 #fff"></div>
<svg style="left:999px;top:590px" width="17" height="16"><path d="M6.6,3.6 L11,7.8 L6.6,12" fill="none" stroke="#1e1e1e" stroke-width="2"/></svg>


</body></html>
